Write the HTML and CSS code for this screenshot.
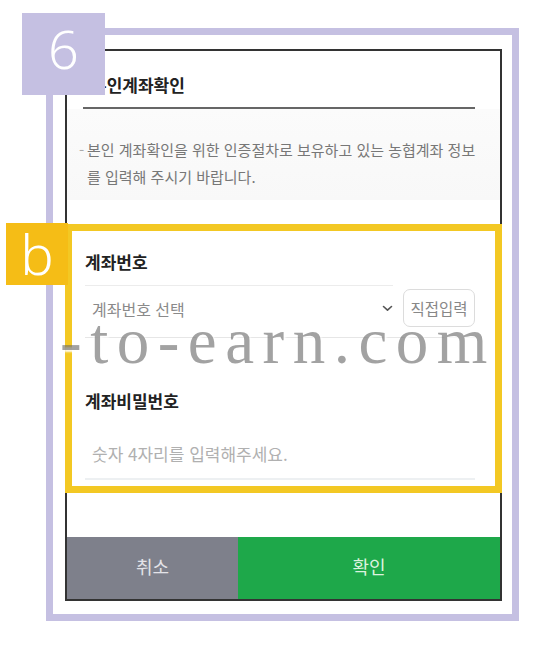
FILE: index.html
```html
<!DOCTYPE html>
<html lang="ko">
<head>
<meta charset="utf-8">
<title>본인계좌확인</title>
<link rel="stylesheet" href="styles.css">
</head>
<body>
<div class="stage">
  <div class="frame">
    <div class="screen">
      <div class="header">
        <h1 class="title">본인계좌확인</h1>
      </div>
      <div class="notice">
        <span class="dash">-</span>
        <p class="notice-text">본인 계좌확인을 위한 인증절차로 보유하고 있는 농협계좌 정보를 입력해 주시기 바랍니다.</p>
      </div>
      <div class="highlight">
        <div class="label">계좌번호</div>
        <div class="select-row">
          <div class="select">
            <span class="select-text">계좌번호 선택</span>
            <svg class="chevron" width="11" height="7" viewBox="0 0 11 7"><path d="M1.5 1.5 L5.5 5.2 L9.5 1.5" fill="none" stroke="#555" stroke-width="1.6" stroke-linecap="round" stroke-linejoin="round"/></svg>
          </div>
          <div class="direct-btn">직접입력</div>
        </div>
        <div class="label label-pw">계좌비밀번호</div>
        <div class="input">숫자 4자리를 입력해주세요.</div>
      </div>
      <div class="actions">
        <div class="btn btn-cancel">취소</div>
        <div class="btn btn-ok">확인</div>
      </div>
    </div>
  </div>
  <div class="badge badge-step">6</div>
  <div class="badge badge-b">b</div>
  <div class="watermark">-to-earn.com</div>
</div>
</body>
</html>
```

FILE: styles.css
```css
* { box-sizing: border-box; }
html, body { margin: 0; padding: 0; background: #fff; }
body {
  font-family: "Noto Sans CJK KR", "Noto Sans", sans-serif;
  width: 538px;
  height: 649px;
  overflow: hidden;
}
.stage {
  position: relative;
  width: 538px;
  height: 649px;
  padding: 28px 0 0 46px;
}
.frame {
  width: 473px;
  height: 593px;
  border: 7px solid #c5c0e2;
  background: #fff;
  padding: 14px 10px 13px 12px;
}
.screen {
  width: 437px;
  height: 552px;
  border: 2px solid #333;
  background: #fff;
  display: flex;
  flex-direction: column;
}
.header {
  margin: 0 25px 0 16px;
  padding: 22px 0 10px 8px;
  border-bottom: 2px solid #666;
}
.title {
  margin: 0;
  font-size: 17px;
  line-height: 24px;
  font-weight: 700;
  color: #222;
}
.notice {
  display: flex;
  padding: 27px 8px 10px 12px;
  background: linear-gradient(#fbfbfb, #f8f8f8);
  height: 91px;
}
.dash {
  font-size: 15px;
  line-height: 27px;
  color: #aaa;
  width: 8px;
  flex: none;
}
.notice-text {
  margin: 0;
  font-size: 15px;
  line-height: 27px;
  color: #777;
  width: 396px;
}
.highlight {
  margin: 24px -2px 0;
  border: 7px solid #f3c823;
  padding: 20px 20px 6px 13px;
  background: #fff;
}
.label {
  font-size: 17px;
  line-height: 22px;
  font-weight: 700;
  color: #222;
}
.select-row {
  margin-top: 12px;
  display: flex;
  align-items: center;
  height: 53px;
  border-bottom: 1px solid #e6e6e6;
}
.select {
  flex: 1;
  height: 53px;
  border-top: 1px solid #ececec;
  display: flex;
  align-items: center;
  justify-content: space-between;
  padding: 0 0 6px 7px;
}
.select-text {
  font-size: 16px;
  color: #8a8a8a;
}
.chevron { display: block; }
.direct-btn {
  margin-left: 10px;
  width: 72px;
  height: 38px;
  border: 1px solid #dcdcdc;
  border-radius: 7px;
  display: flex;
  align-items: center;
  justify-content: center;
  font-size: 15.5px;
  color: #888;
  margin-bottom: 6px;
}
.label-pw { margin-top: 52px; }
.input {
  margin-top: 16px;
  height: 52px;
  border-bottom: 2px solid #edf0f2;
  padding: 0 0 0 7px;
  display: flex;
  align-items: center;
  font-size: 17px;
  color: #b0b0b0;
}
.actions {
  margin-top: 44px;
  display: grid;
  grid-template-columns: 171px 1fr;
  height: 62px;
}
.btn {
  display: flex;
  align-items: center;
  justify-content: center;
  font-size: 18px;
  padding-bottom: 4px;
}
.btn-cancel { background: #7e808b; color: #e3e3e8; }
.btn-ok { background: #1ea84a; color: #dcf2df; }

.badge {
  position: absolute;
  color: #fff;
  display: flex;
  align-items: center;
  justify-content: center;
  font-family: "Noto Sans", sans-serif;
}
.badge-step {
  left: 22px;
  top: 13px;
  width: 83px;
  height: 82px;
  background: #c5c0e2;
  font-size: 54px;
  font-weight: 300;
  padding-bottom: 12px;
}
.badge-b {
  left: 6px;
  top: 223px;
  width: 62px;
  height: 62px;
  background: #f5bd16;
  font-size: 56px;
  font-weight: 300;
  padding-bottom: 2px;
}
.watermark {
  position: absolute;
  left: 60px;
  top: 326px;
  font-family: "Liberation Serif", serif;
  font-size: 65px;
  line-height: 30px;
  letter-spacing: 8.5px;
  color: rgba(100, 100, 100, 0.6);
  text-shadow: 2px 2px 2px rgba(255, 255, 255, 0.9);
  white-space: nowrap;
  pointer-events: none;
}
```
